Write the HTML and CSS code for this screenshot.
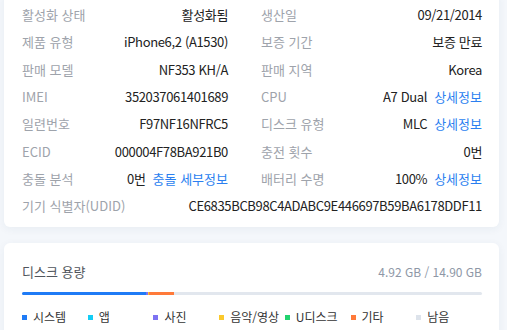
FILE: index.html
```html
<!DOCTYPE html>
<html lang="ko">
<head>
    <meta charset="UTF-8">
    <meta name="viewport" content="width=device-width, initial-scale=1.0">
    <title>기기 정보</title>
    <link rel="stylesheet" href="styles.css">
</head>
<body>
    <section class="tarjeta info">
        <div class="fila"><span class="etiqueta">활성화 상태</span><span class="valor">활성화됨</span></div>
        <div class="fila"><span class="etiqueta">생산일</span><span class="valor">09/21/2014</span></div>
        <div class="fila"><span class="etiqueta">제품 유형</span><span class="valor">iPhone6,2 (A1530)</span></div>
        <div class="fila"><span class="etiqueta">보증 기간</span><span class="valor">보증 만료</span></div>
        <div class="fila"><span class="etiqueta">판매 모델</span><span class="valor">NF353 KH/A</span></div>
        <div class="fila"><span class="etiqueta">판매 지역</span><span class="valor">Korea</span></div>
        <div class="fila"><span class="etiqueta">IMEI</span><span class="valor">352037061401689</span></div>
        <div class="fila"><span class="etiqueta">CPU</span><span class="valor">A7 Dual<a href="#">상세정보</a></span></div>
        <div class="fila"><span class="etiqueta">일련번호</span><span class="valor">F97NF16NFRC5</span></div>
        <div class="fila"><span class="etiqueta">디스크 유형</span><span class="valor">MLC<a href="#">상세정보</a></span></div>
        <div class="fila"><span class="etiqueta">ECID</span><span class="valor">000004F78BA921B0</span></div>
        <div class="fila"><span class="etiqueta">충전 횟수</span><span class="valor">0번</span></div>
        <div class="fila"><span class="etiqueta">충돌 분석</span><span class="valor">0번<a href="#">충돌 세부정보</a></span></div>
        <div class="fila"><span class="etiqueta">배터리 수명</span><span class="valor">100%<a href="#">상세정보</a></span></div>
        <div class="fila ancha"><span class="etiqueta">기기 식별자(UDID)</span><span class="valor">CE6835BCB98C4ADABC9E446697B59BA6178DDF11</span></div>
    </section>

    <section class="tarjeta disco">
        <div class="cabecera">
            <h2>디스크 용량</h2>
            <span class="total">4.92 GB / 14.90 GB</span>
        </div>
        <div class="barra">
            <span class="seg sistema" style="width: 26.9%"></span>
            <span class="seg app" style="width: 0.1%"></span>
            <span class="seg foto" style="width: 0.5%"></span>
            <span class="seg musica" style="width: 0.1%"></span>
            <span class="seg udisco" style="width: 0.1%"></span>
            <span class="seg otro" style="width: 5.3%"></span>
        </div>
        <ul class="leyenda">
            <li><i class="sistema"></i>시스템</li>
            <li><i class="app"></i>앱</li>
            <li><i class="foto"></i>사진</li>
            <li><i class="musica"></i>음악/영상</li>
            <li><i class="udisco"></i>U디스크</li>
            <li><i class="otro"></i>기타</li>
            <li><i class="libre"></i>남음</li>
        </ul>
    </section>
</body>
</html>
```

FILE: styles.css
```css
body {
    font-family: "Noto Sans CJK KR", "Noto Sans", sans-serif;
    background-color: #f4f7fb;
    color: #222;
    margin: 0;
    padding: 0 8px 0 4px;
    overflow: hidden;
}

.tarjeta {
    background-color: #fff;
    border-radius: 6px;
    box-shadow: 0 2px 8px rgba(30, 60, 110, 0.06);
}

.info {
    margin-top: -9px;
    padding: 10px 17px 8px 18px;
    display: grid;
    grid-template-columns: 206px 1fr;
    column-gap: 33px;
    grid-auto-rows: 27.3px;
    font-size: 13px;
}

.fila {
    display: flex;
    align-items: center;
    justify-content: space-between;
    white-space: nowrap;
}

.fila.ancha {
    grid-column: 1 / 3;
}

.etiqueta {
    color: #9ea3ab;
}

.valor {
    color: #222;
    letter-spacing: -0.35px;
}

.valor a {
    color: #2b7ff0;
    text-decoration: none;
    margin-left: 7px;
    letter-spacing: 0;
}

.disco {
    margin-top: 16px;
    padding: 18px 17px 20px 18px;
}

.cabecera {
    display: flex;
    justify-content: space-between;
    align-items: center;
    height: 20px;
}

.cabecera h2 {
    margin: 0;
    font-size: 13px;
    font-weight: normal;
    color: #50555c;
}

.total {
    font-size: 12px;
    color: #8e97a6;
}

.barra {
    display: flex;
    height: 3px;
    margin-top: 11px;
    background-color: #e2e7ee;
    border-radius: 2px;
    overflow: hidden;
}

.seg {
    height: 100%;
}

.leyenda {
    list-style: none;
    margin: 13px 0 0;
    padding: 0;
    display: grid;
    grid-template-columns: repeat(7, 1fr);
    font-size: 12px;
    line-height: 18px;
    color: #333;
}

.leyenda li {
    display: flex;
    align-items: center;
}

.leyenda i {
    width: 5px;
    height: 5px;
    margin-right: 6px;
}

.sistema { background-color: #1f7bf6; }
.app { background-color: #14cdf5; }
.foto { background-color: #7d72f2; }
.musica { background-color: #fbc92c; }
.udisco { background-color: #22d36f; }
.otro { background-color: #ff7a3a; }
.libre { background-color: #dde3eb; }
```
